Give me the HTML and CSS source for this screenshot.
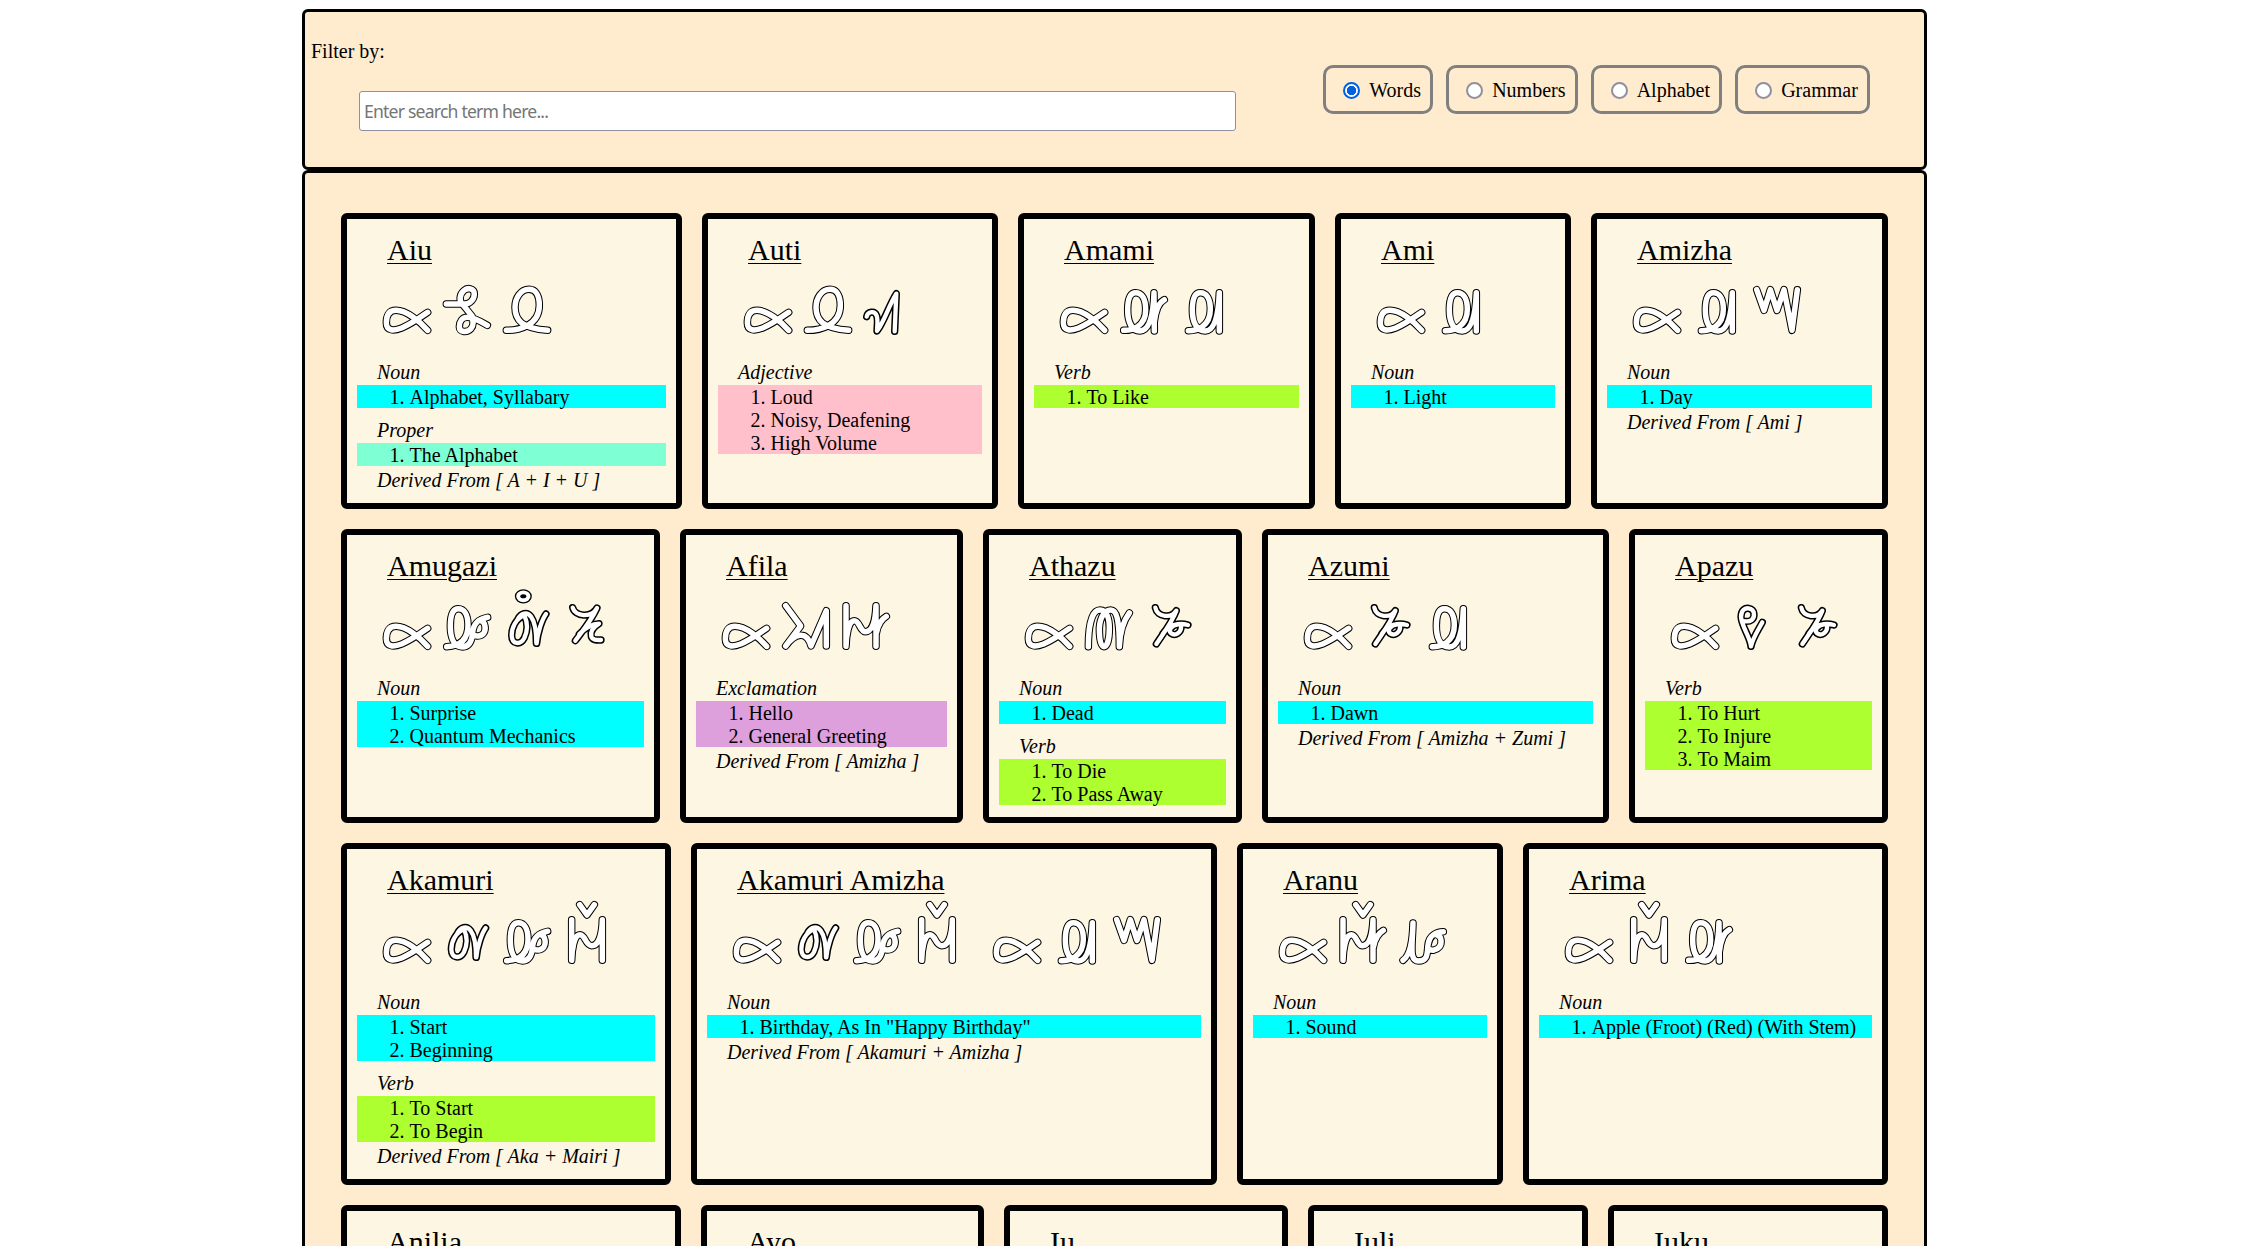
FILE: index.html
```html
<!DOCTYPE html>
<html lang="en">
<head>
<meta charset="utf-8">
<title>Dictionary</title>
<link rel="stylesheet" href="styles.css">
</head>
<body>
<svg class="sprite" aria-hidden="true">
  <defs>
    <path id="p-a" d="M173 127 C150 143 120 164 95 174 C72 183 49 184 49 158 C49 138 56 121 78 121 C110 121 150 155 173 181"/>
    <path id="p-i" d="M229 102 L285 102 C300 102 313 88 313 72 C313 54 292 52 281 62 C268 74 266 94 280 106 L306 138 M352 166 C325 150 305 142 292 142 C276 142 268 156 268 170 C268 188 292 188 303 176 C311 167 311 152 305 143"/>
    <path id="p-u" d="M409 181 C445 181 508 168 508 106 C508 78 498 58 477 58 C452 58 435 84 435 112 C435 150 455 175 533 181"/>
    <path id="p-ti" d="M26 143 C29 127 50 124 56 140 C61 155 57 172 57 186 C78 160 92 110 115 74 L110 187"/>
    <path id="p-ma" d="M416 1111 C440 1112 482 1100 482 1050 C482 1015 470 998 452 998 C434 998 428 1020 428 1050 C428 1085 440 1113 465 1113 C495 1112 505 1060 507 998 L508 1113 M508 1085 C512 1052 520 1028 538 1019"/>
    <path id="p-mi" d="M1024 242 C1050 242 1090 230 1090 178 C1090 145 1078 128 1060 128 C1042 128 1036 150 1036 180 C1036 215 1048 243 1075 243 C1102 243 1114 195 1117 128 L1117 243"/>
    <path id="p-zha" d="M1190 119 L1212 181 L1231 119 L1251 181 L1272 119 L1296 241 L1312 119"/>
    <path id="p-mu" d="M410 242 C440 241 474 230 474 178 C474 145 462 128 445 128 C427 128 421 150 421 180 C421 215 432 243 458 243 C480 242 486 222 488 200 C491 168 510 158 533 154 M512 164 C527 168 528 190 522 200 C515 211 497 213 489 206"/>
    <path id="p-ka" d="M282 148 C256 158 244 185 244 208 C245 236 270 238 282 216 C294 190 290 165 282 148 M262 160 C272 141 290 136 302 152 C314 168 318 200 318 232 M347 144 C335 160 322 200 319 232"/>
    <path id="p-ri" d="M605 119 L605 241 C606 210 612 164 630 164 C646 164 646 196 665 197 C686 197 696 165 697 119 L697 241 M629 74 L651 105 L673 74"/>
    <path id="p-la" d="M30 62 L30 184 C31 153 37 107 55 107 C71 107 71 139 88 140 C108 140 118 110 120 62 L120 184 M121 145 C125 118 140 100 151 94"/>
    <path id="p-nu" d="M1149 1111 C1172 1095 1178 1040 1179 999 C1178 1060 1166 1113 1195 1113 C1225 1112 1221 1090 1224 1065 C1227 1035 1250 1026 1270 1025 M1251 1035 C1266 1039 1266 1061 1258 1071 C1250 1081 1234 1083 1226 1077"/>
    <path id="p-zi" d="M608 1013 C615 1040 665 1045 681 1014 C665 1050 640 1080 616 1112 M628 1092 C645 1075 665 1062 687 1061 C668 1073 660 1085 664 1100 C668 1111 680 1110 693 1110"/>
    <path id="p-zu" d="M406 53 C412 82 455 86 469 62 C457 95 430 130 409 162 M428 132 C446 102 480 98 504 105 M474 103 C454 106 444 121 453 130 C466 140 485 127 483 108"/>
    <path id="p-tha" d="M205 170 C205 120 212 60 240 60 C262 60 268 90 268 115 C268 145 262 170 252 170 C240 170 238 140 238 115 C240 80 255 60 272 60 C290 60 298 90 298 170 M328 69 C312 90 300 120 298 170"/>
    <path id="p-fi" d="M1247 1007 L1292 1068 L1247 1128 C1275 1090 1310 1080 1323 1128 L1369 1022 L1369 1128"/>
    <path id="p-pa" d="M603 169 C600 140 574 108 573 80 C574 58 586 54 596 55 C616 58 615 82 605 90 C596 97 585 94 578 93 M637 97 C625 120 610 140 603 169"/>
  </defs>
  <symbol id="g-a" viewBox="21 -3 180 216"><use class="ink" href="#p-a"/><use class="core" href="#p-a"/></symbol>
  <symbol id="g-i" viewBox="201 -3 180 216"><use class="ink" href="#p-i"/><use class="core" href="#p-i"/></symbol>
  <symbol id="g-u" viewBox="381 -3 180 216"><use class="ink" href="#p-u"/><use class="core" href="#p-u"/></symbol>
  <symbol id="g-ti" viewBox="0 0 180 216"><use class="ink bold" href="#p-ti"/><use class="core slim" href="#p-ti"/></symbol>
  <symbol id="g-ma" viewBox="387 927 180 216"><use class="ink" href="#p-ma"/><use class="core" href="#p-ma"/></symbol>
  <symbol id="g-mi" viewBox="981 57 180 216"><use class="ink" href="#p-mi"/><use class="core" href="#p-mi"/></symbol>
  <symbol id="g-zha" viewBox="1161 57 180 216"><use class="ink" href="#p-zha"/><use class="core" href="#p-zha"/></symbol>
  <symbol id="g-mu" viewBox="381 57 180 216"><use class="ink" href="#p-mu"/><use class="core" href="#p-mu"/></symbol>
  <symbol id="g-ka" viewBox="201 57 180 216"><use class="ink bold" href="#p-ka"/><use class="core slim" href="#p-ka"/></symbol>
  <symbol id="g-ga" viewBox="200 57 180 216"><use class="ink bold" href="#p-ka"/><use class="core slim" href="#p-ka"/><ellipse class="ring" cx="279" cy="91" rx="23.5" ry="19.5"/><ellipse class="dot" cx="279" cy="91" rx="9" ry="6"/></symbol>
  <symbol id="g-ri" viewBox="561 57 180 216"><use class="ink" href="#p-ri"/><use class="core" href="#p-ri"/></symbol>
  <symbol id="g-la" viewBox="0 0 180 216"><use class="ink" href="#p-la"/><use class="core" href="#p-la"/></symbol>
  <symbol id="g-ra" viewBox="0 0 180 216"><use class="ink" href="#p-la"/><path class="ink" d="M68 17 L90 48 L112 17"/><use class="core" href="#p-la"/><path class="core" d="M68 17 L90 48 L112 17"/></symbol>
  <symbol id="g-nu" viewBox="1119 927 180 216"><use class="ink" href="#p-nu"/><use class="core" href="#p-nu"/></symbol>
  <symbol id="g-zi" viewBox="561 945 180 216"><use class="ink bold" href="#p-zi"/><use class="core slim" href="#p-zi"/></symbol>
  <symbol id="g-zu" viewBox="357 -15 180 216"><use class="ink bold" href="#p-zu"/><use class="core slim" href="#p-zu"/></symbol>
  <symbol id="g-tha" viewBox="177 -15 180 216"><use class="ink" href="#p-tha"/><use class="core" href="#p-tha"/></symbol>
  <symbol id="g-fi" viewBox="1218 945 180 216"><use class="ink" href="#p-fi"/><use class="core" href="#p-fi"/></symbol>
  <symbol id="g-pa" viewBox="525 -15 180 216"><use class="ink bold" href="#p-pa"/><use class="core slim" href="#p-pa"/></symbol>
</svg>

<header class="panel filter">
  <div class="search">
    <label class="filter-label" for="q">Filter by:</label>
    <input class="search-box" id="q" type="text" placeholder="Enter search term here...">
  </div>
  <div class="modes">
    <label class="mode"><span class="radio checked"></span>Words</label>
    <label class="mode"><span class="radio"></span>Numbers</label>
    <label class="mode"><span class="radio"></span>Alphabet</label>
    <label class="mode"><span class="radio"></span>Grammar</label>
  </div>
</header>

<main class="panel words">
  <section class="row row-a">
    <article class="card">
      <h2 class="title">Aiu</h2>
      <div class="glyphs"><svg class="glyph"><use href="#g-a"/></svg><svg class="glyph"><use href="#g-i"/></svg><svg class="glyph"><use href="#g-u"/></svg></div>
      <p class="kind">Noun</p>
      <ol class="defs noun"><li>Alphabet, Syllabary</li></ol>
      <p class="kind">Proper</p>
      <ol class="defs proper"><li>The Alphabet</li></ol>
      <p class="origin">Derived From [ A + I + U ]</p>
    </article>
    <article class="card">
      <h2 class="title">Auti</h2>
      <div class="glyphs"><svg class="glyph"><use href="#g-a"/></svg><svg class="glyph"><use href="#g-u"/></svg><svg class="glyph"><use href="#g-ti"/></svg></div>
      <p class="kind">Adjective</p>
      <ol class="defs adjective"><li>Loud</li><li>Noisy, Deafening</li><li>High Volume</li></ol>
    </article>
    <article class="card">
      <h2 class="title">Amami</h2>
      <div class="glyphs"><svg class="glyph"><use href="#g-a"/></svg><svg class="glyph"><use href="#g-ma"/></svg><svg class="glyph"><use href="#g-mi"/></svg></div>
      <p class="kind">Verb</p>
      <ol class="defs verb"><li>To Like</li></ol>
    </article>
    <article class="card">
      <h2 class="title">Ami</h2>
      <div class="glyphs"><svg class="glyph"><use href="#g-a"/></svg><svg class="glyph"><use href="#g-mi"/></svg></div>
      <p class="kind">Noun</p>
      <ol class="defs noun"><li>Light</li></ol>
    </article>
    <article class="card">
      <h2 class="title">Amizha</h2>
      <div class="glyphs"><svg class="glyph"><use href="#g-a"/></svg><svg class="glyph"><use href="#g-mi"/></svg><svg class="glyph"><use href="#g-zha"/></svg></div>
      <p class="kind">Noun</p>
      <ol class="defs noun"><li>Day</li></ol>
      <p class="origin">Derived From [ Ami ]</p>
    </article>
  </section>

  <section class="row row-b">
    <article class="card">
      <h2 class="title">Amugazi</h2>
      <div class="glyphs"><svg class="glyph"><use href="#g-a"/></svg><svg class="glyph"><use href="#g-mu"/></svg><svg class="glyph"><use href="#g-ga"/></svg><svg class="glyph"><use href="#g-zi"/></svg></div>
      <p class="kind">Noun</p>
      <ol class="defs noun"><li>Surprise</li><li>Quantum Mechanics</li></ol>
    </article>
    <article class="card">
      <h2 class="title">Afila</h2>
      <div class="glyphs"><svg class="glyph"><use href="#g-a"/></svg><svg class="glyph"><use href="#g-fi"/></svg><svg class="glyph"><use href="#g-la"/></svg></div>
      <p class="kind">Exclamation</p>
      <ol class="defs exclamation"><li>Hello</li><li>General Greeting</li></ol>
      <p class="origin">Derived From [ Amizha ]</p>
    </article>
    <article class="card">
      <h2 class="title">Athazu</h2>
      <div class="glyphs"><svg class="glyph"><use href="#g-a"/></svg><svg class="glyph"><use href="#g-tha"/></svg><svg class="glyph"><use href="#g-zu"/></svg></div>
      <p class="kind">Noun</p>
      <ol class="defs noun"><li>Dead</li></ol>
      <p class="kind">Verb</p>
      <ol class="defs verb"><li>To Die</li><li>To Pass Away</li></ol>
    </article>
    <article class="card">
      <h2 class="title">Azumi</h2>
      <div class="glyphs"><svg class="glyph"><use href="#g-a"/></svg><svg class="glyph"><use href="#g-zu"/></svg><svg class="glyph"><use href="#g-mi"/></svg></div>
      <p class="kind">Noun</p>
      <ol class="defs noun"><li>Dawn</li></ol>
      <p class="origin">Derived From [ Amizha + Zumi ]</p>
    </article>
    <article class="card">
      <h2 class="title">Apazu</h2>
      <div class="glyphs"><svg class="glyph"><use href="#g-a"/></svg><svg class="glyph"><use href="#g-pa"/></svg><svg class="glyph"><use href="#g-zu"/></svg></div>
      <p class="kind">Verb</p>
      <ol class="defs verb"><li>To Hurt</li><li>To Injure</li><li>To Maim</li></ol>
    </article>
  </section>

  <section class="row row-c">
    <article class="card">
      <h2 class="title">Akamuri</h2>
      <div class="glyphs"><svg class="glyph"><use href="#g-a"/></svg><svg class="glyph"><use href="#g-ka"/></svg><svg class="glyph"><use href="#g-mu"/></svg><svg class="glyph"><use href="#g-ri"/></svg></div>
      <p class="kind">Noun</p>
      <ol class="defs noun"><li>Start</li><li>Beginning</li></ol>
      <p class="kind">Verb</p>
      <ol class="defs verb"><li>To Start</li><li>To Begin</li></ol>
      <p class="origin">Derived From [ Aka + Mairi ]</p>
    </article>
    <article class="card">
      <h2 class="title">Akamuri Amizha</h2>
      <div class="glyphs"><svg class="glyph"><use href="#g-a"/></svg><svg class="glyph"><use href="#g-ka"/></svg><svg class="glyph"><use href="#g-mu"/></svg><svg class="glyph"><use href="#g-ri"/></svg><span class="space"></span><svg class="glyph"><use href="#g-a"/></svg><svg class="glyph"><use href="#g-mi"/></svg><svg class="glyph"><use href="#g-zha"/></svg></div>
      <p class="kind">Noun</p>
      <ol class="defs noun"><li>Birthday, As In "Happy Birthday"</li></ol>
      <p class="origin">Derived From [ Akamuri + Amizha ]</p>
    </article>
    <article class="card">
      <h2 class="title">Aranu</h2>
      <div class="glyphs"><svg class="glyph"><use href="#g-a"/></svg><svg class="glyph"><use href="#g-ra"/></svg><svg class="glyph"><use href="#g-nu"/></svg></div>
      <p class="kind">Noun</p>
      <ol class="defs noun"><li>Sound</li></ol>
    </article>
    <article class="card">
      <h2 class="title">Arima</h2>
      <div class="glyphs"><svg class="glyph"><use href="#g-a"/></svg><svg class="glyph"><use href="#g-ri"/></svg><svg class="glyph"><use href="#g-ma"/></svg></div>
      <p class="kind">Noun</p>
      <ol class="defs noun"><li>Apple (Froot) (Red) (With Stem)</li></ol>
    </article>
  </section>

  <section class="row row-d">
    <article class="card"><h2 class="title">Anilia</h2></article>
    <article class="card"><h2 class="title">Ayo</h2></article>
    <article class="card"><h2 class="title">Iu</h2></article>
    <article class="card"><h2 class="title">Iuli</h2></article>
    <article class="card"><h2 class="title">Iuku</h2></article>
  </section>
</main>
</body>
</html>
```
FILE: styles.css
```css
* { box-sizing: border-box; }

html { overflow: hidden; }

body {
  margin: 0;
  padding: 9px 318px 0 302px;
  height: 100vh;
  overflow: hidden;
  background: #fff;
  color: #000;
  font: 20px/23px "Liberation Serif", "Times New Roman", serif;
}

.sprite { display: none; }

.panel {
  background: #ffebcd;
  border: 3px solid #000;
  border-radius: 6px;
}

.filter {
  display: flex;
  justify-content: space-between;
  height: 161px;
  padding: 27px 54px 0 6px;
}

.search { display: flex; flex-direction: column; }

.filter-label { height: 23px; line-height: 24px; }

.search-box {
  width: 877px;
  height: 40px;
  margin: 29px 0 0 48px;
  padding: 0 4px;
  border: 1px solid #8f8f9d;
  border-radius: 3px;
  background: #fff;
  font: 17.6px "Noto Sans", sans-serif;
  letter-spacing: -0.8px;
}

.search-box::placeholder { color: #757575; opacity: 1; }

.modes { display: flex; gap: 13px; padding-top: 26px; }

.mode {
  display: flex;
  align-items: center;
  height: 49px;
  padding: 2px 9.2px 0 17px;
  border: 3px solid #808080;
  border-radius: 10px;
}

.radio {
  width: 17px;
  height: 17px;
  margin: 0 9px 1px 0;
  border: 2px solid #8f8f9d;
  border-radius: 50%;
  background: #fff;
}

.radio.checked {
  border-color: #0060df;
  background: radial-gradient(circle, #0060df 4.4px, #fff 5px);
}

.words {
  display: flex;
  flex-direction: column;
  gap: 20px;
  height: 1076px;
  padding: 40px 36px 0;
  overflow: hidden;
  border-bottom: 0;
  border-radius: 6px 6px 0 0;
}

.row { display: grid; flex: none; gap: 20px; }
.row-a { grid-template-columns: 341fr 296fr 297fr 236fr 297fr; }
.row-b { grid-template-columns: 319fr 283fr 259fr 347fr 259fr; }
.row-c { grid-template-columns: 330fr 526fr 266fr 365fr; }
.row-d { grid-template-columns: 340fr 283fr 284fr 280fr 280fr; min-height: 296px; }

.card {
  min-width: 0;
  padding: 14px 10px 11px;
  border: 6px solid #000;
  border-radius: 6px;
  background: #fdf6e3;
}

.title {
  height: 36px;
  margin: 0 0 0 30px;
  font-size: 30px;
  font-weight: normal;
  line-height: 34px;
  text-decoration: underline;
  text-decoration-thickness: 1px;
  text-underline-offset: 3px;
}

.glyphs { display: flex; margin: 0 0 20px 20px; }
.glyph { display: block; flex: none; width: 60px; height: 72px; }
.space { width: 20px; }

.ink, .core {
  fill: none;
  stroke: #000;
  stroke-width: 22.5;
  stroke-linecap: round;
  stroke-linejoin: round;
}
.core { stroke: #fff; stroke-width: 16.5; }
.ink.bold { stroke-width: 22; }
.core.slim { stroke-width: 13; }
.ring { fill: #fff; stroke: #000; stroke-width: 4; }
.dot { fill: #000; }

.kind {
  margin: 11px 0 1px 20px;
  font-style: italic;
}

.defs {
  margin: 0 0 1px;
  padding: 0 0 0 52.5px;
}

.defs li { height: 23px; line-height: 25px; }

.noun { background: cyan; }
.proper { background: aquamarine; }
.adjective { background: pink; }
.verb { background: greenyellow; }
.exclamation { background: plum; }

.origin {
  margin: 3px 0 0 20px;
  font-style: italic;
}
```
